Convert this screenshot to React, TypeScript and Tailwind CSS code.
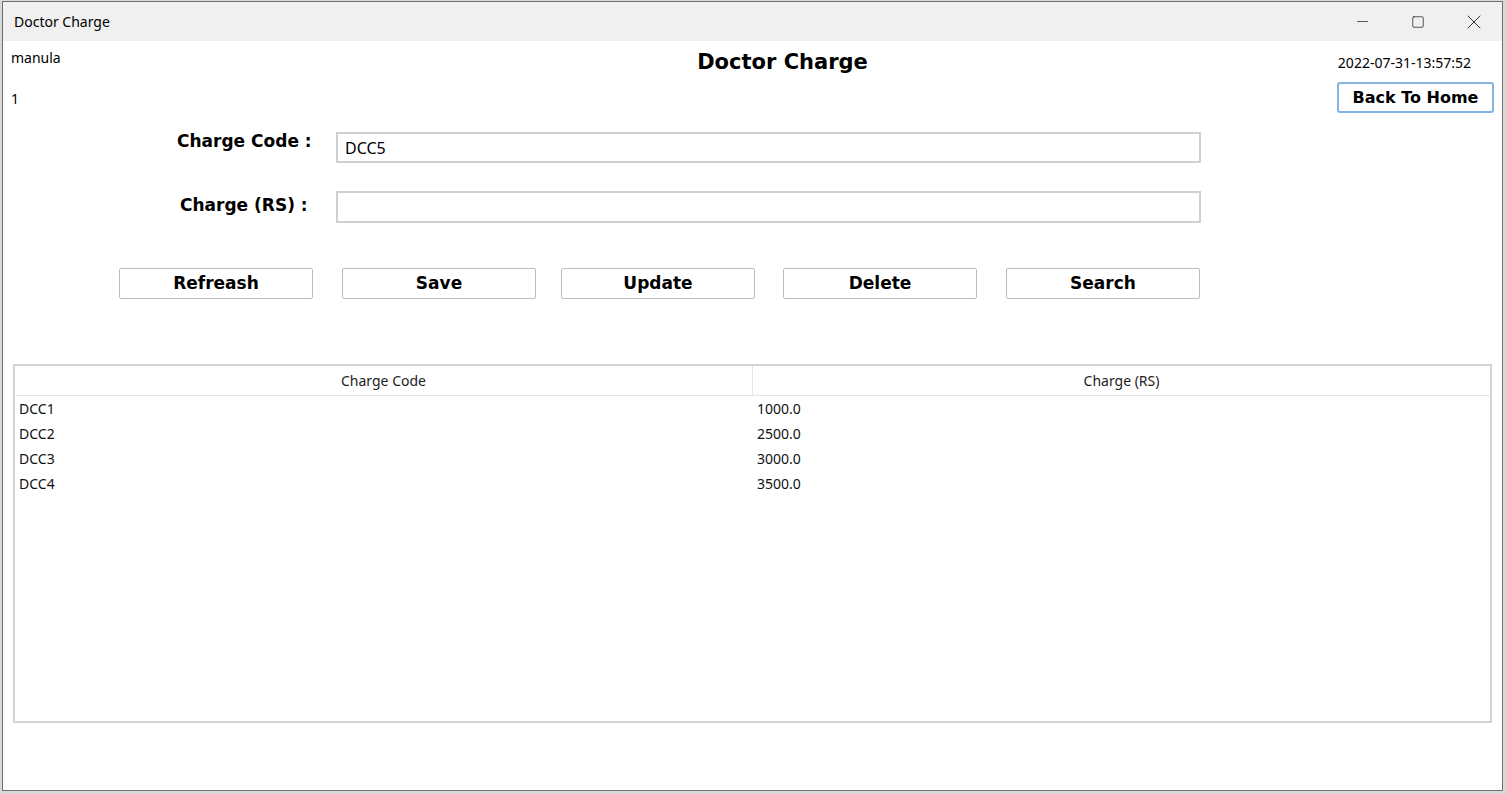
import { Minus, Square, X } from "lucide-react";

// Données du tableau
const rows = [
  { code: "DCC1", charge: "1000.0" },
  { code: "DCC2", charge: "2500.0" },
  { code: "DCC3", charge: "3000.0" },
  { code: "DCC4", charge: "3500.0" },
];

// libellé + marge gauche de chaque bouton
const buttons = [
  { label: "Refreash", ml: "ml-0" },
  { label: "Save", ml: "ml-[29px]" },
  { label: "Update", ml: "ml-[25px]" },
  { label: "Delete", ml: "ml-[28px]" },
  { label: "Search", ml: "ml-[29px]" },
];

const ui = "font-['Noto_Sans','Open_Sans',sans-serif]";
const bold = "font-['DejaVu_Sans','Verdana',sans-serif] font-bold";

export default function App() {
  return (
    <div className={`h-[794px] w-[1506px] bg-[#d9d9d9] pl-[2px] pt-[1px] pr-[3px] pb-[3px] ${ui}`}>
      <div className="flex h-full flex-col border border-[#6f6f6f] bg-white">
        {/* Barre de titre */}
        <div className="flex h-[39px] items-center bg-[#f0f0f0]">
          <span className="pl-[11px] text-[14px] text-black">Doctor Charge</span>
          <div className="ml-auto flex h-full items-stretch">
            <div className="flex w-[56px] items-center justify-center">
              <Minus size={17} strokeWidth={0.9} />
            </div>
            <div className="flex w-[56px] items-center justify-center">
              <Square size={14} strokeWidth={1.1} />
            </div>
            <div className="flex w-[56px] items-center justify-center">
              <X size={24} strokeWidth={0.8} />
            </div>
          </div>
        </div>

        {/* En-tête */}
        <div className="flex px-[8px] pt-[7px]">
          <div className="flex w-[200px] flex-col">
            <span className="text-[14px] leading-[20px]">manula</span>
            <span className="mt-[21px] text-[14px] leading-[20px]">1</span>
          </div>
          <div className="flex-1 pl-[20px] text-center">
            <h1 className={`${bold} text-[21px] leading-[28px]`}>Doctor Charge</h1>
          </div>
          <div className="flex w-[160px] flex-col items-end pr-[2px]">
            <span className="mt-[5px] pr-[21px] text-[14px] leading-[20px]">2022-07-31-13:57:52</span>
            <button className={`${bold} mt-[9px] h-[31px] w-[157px] -mr-[2px] rounded-[3px] border-2 border-[#86b4e2] bg-white text-[16px]`}>
              Back To Home
            </button>
          </div>
        </div>

        {/* Formulaire */}
        <div className="mt-[19px] flex flex-col gap-[28px] pl-[173px]">
          <div className="flex items-center">
            <label className={`${bold} w-[160px] pl-[1px] text-[17px] -mt-[12px]`}>Charge Code :</label>
            <div className="flex h-[31px] w-[865px] items-center border-2 border-[#d0d0d0] px-[7px] text-[16px]">
              DCC5
            </div>
          </div>
          <div className="flex items-center">
            <label className={`${bold} w-[160px] pl-[4px] text-[17px] -mt-[2px]`}>Charge (RS) :</label>
            <div className="h-[32px] w-[865px] border-2 border-[#d0d0d0]" />
          </div>
        </div>

        {/* Boutons */}
        <div className="mt-[45px] flex pl-[116px]">
          {buttons.map((b) => (
            <button
              key={b.label}
              className={`${bold} ${b.ml} h-[31px] w-[194px] rounded-[2px] border border-[#bdbdbd] bg-white text-[17px]`}
            >
              {b.label}
            </button>
          ))}
        </div>

        {/* Tableau */}
        <div className="mx-[10px] mt-[65px] h-[359px] border-2 border-[#d4d4d4]">
          <div className="flex h-[30px] border-b border-[#e5e5e5] text-[14px] text-[#222]">
            <div className="flex flex-1 items-center justify-center border-r border-[#e5e5e5]">Charge Code</div>
            <div className="flex flex-1 items-center justify-center">Charge (RS)</div>
          </div>
          {rows.map((r) => (
            <div key={r.code} className="flex h-[25px] items-center text-[14px] text-[#111]">
              <div className="flex-1 pl-[4px]">{r.code}</div>
              <div className="flex-1 pl-[5px]">{r.charge}</div>
            </div>
          ))}
        </div>
      </div>
    </div>
  );
}
